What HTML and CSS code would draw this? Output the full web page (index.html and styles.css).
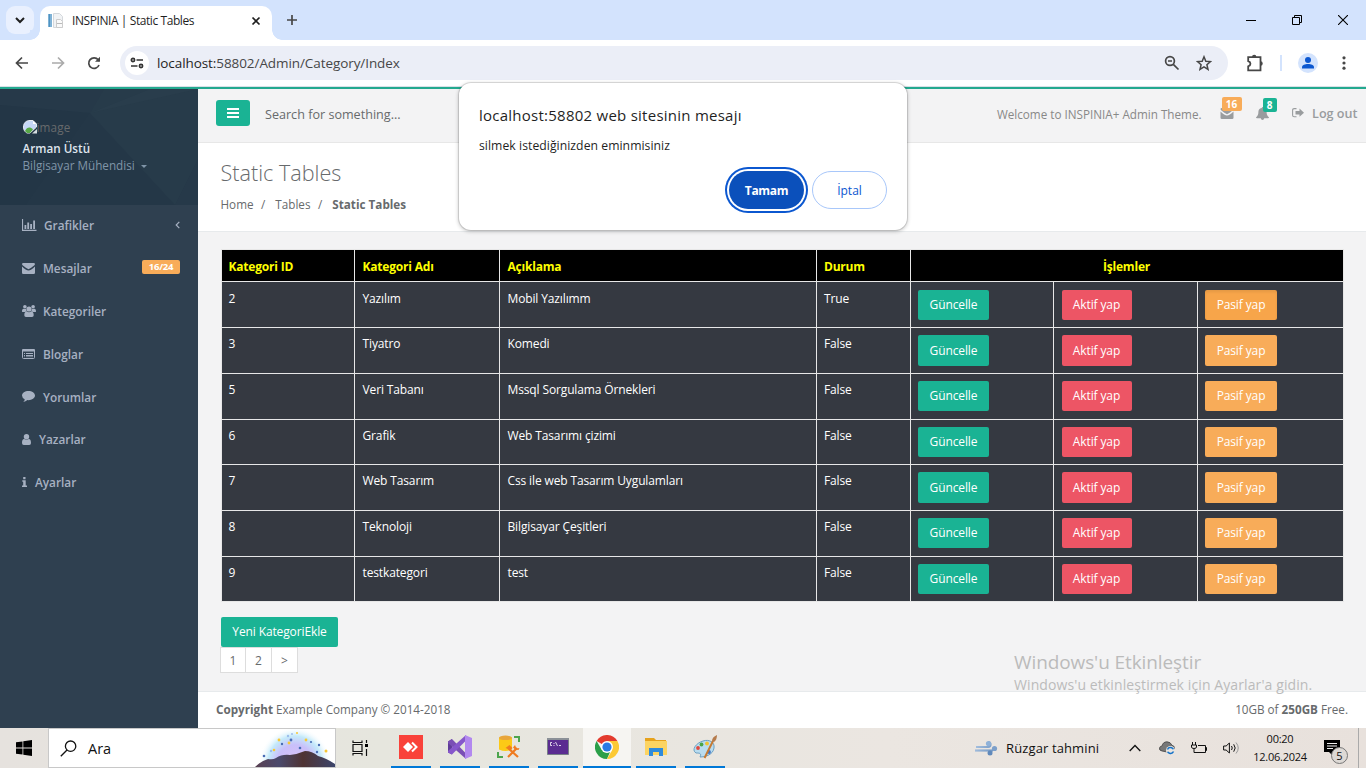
FILE: index.html
```html
<!DOCTYPE html>
<html lang="tr">
<head>
<meta charset="utf-8">
<title>INSPINIA | Static Tables</title>
<link rel="stylesheet" href="styles.css">
</head>
<body>
<div class="screen">
  <header class="tabstrip">
    <div class="tab-search"><svg width="12" height="12" viewBox="0 0 12 12"><path d="M2 4l4 4 4-4" fill="none" stroke="#1f1f1f" stroke-width="2"/></svg></div>
    <div class="tab">
      <svg width="16" height="16" viewBox="0 0 16 16"><path d="M0 1h4v13H0z" fill="#7fb2d6"/><path d="M1 1h1v13H1z" fill="#4f93c2"/><path d="M5.500.5h6l3 3v11h-9z" fill="#f1f3f5" stroke="#d4d8dc"/><path d="M8.500 6.500h4l2 2v6h-6z" fill="#fafafa" stroke="#ccc"/><path d="M9 10.500h5" stroke="#bbb"/></svg>
      <span class="tab-title">INSPINIA | Static Tables</span>
      <svg class="tab-close" width="10" height="10" viewBox="0 0 10 10"><path d="M1.500 1.500l7 7M8.500 1.500l-7 7" stroke="#1f1f1f" stroke-width="1.700"/></svg>
    </div>
    <svg class="new-tab" width="12" height="12" viewBox="0 0 12 12"><path d="M6 1v10M1 6h10" stroke="#474747" stroke-width="1.700"/></svg>
    <div class="win-buttons">
      <svg width="10" height="10" viewBox="0 0 10 10"><path d="M0 5.500h10" stroke="#000"/></svg>
      <svg width="10" height="10" viewBox="0 0 10 10"><path d="M.5 2.500h7v7h-7zM2.500 2.500v-2h7v7h-2" fill="none" stroke="#000"/></svg>
      <svg width="10" height="10" viewBox="0 0 10 10"><path d="M0 0l10 10M10 0L0 10" stroke="#000" stroke-width="1.100"/></svg>
    </div>
  </header>
  <nav class="toolbar">
    <svg width="14" height="14" viewBox="0 0 14 14"><path d="M13 7H2M7 1.500L1.500 7 7 12.500" fill="none" stroke="#474747" stroke-width="1.700"/></svg>
    <svg width="14" height="14" viewBox="0 0 14 14"><path d="M1 7h11M7 1.500L12.500 7 7 12.500" fill="none" stroke="#ababab" stroke-width="1.700"/></svg>
    <svg width="14" height="14" viewBox="0 0 14 14"><path d="M12 9a5.300 5.300 0 1 1-.8-5.200L12 5" fill="none" stroke="#474747" stroke-width="1.700"/><path d="M13 .8v5H8z" fill="#474747"/></svg>
    <div class="omnibox">
      <span class="site-info"><svg width="14" height="12" viewBox="0 0 14 12"><g fill="none" stroke="#333" stroke-width="1.700"><circle cx="3" cy="3" r="1.600"/><path d="M6.500 3H13M1 9h6.500"/><circle cx="11" cy="9" r="1.600"/></g></svg></span>
      <span class="url"><b>localhost:</b>58802/Admin/Category/Index</span>
      <svg class="zoom-out" width="16" height="16" viewBox="0 0 16 16"><g fill="none" stroke="#474747" stroke-width="1.700"><circle cx="6" cy="6" r="4.400"/><path d="M9.300 9.300l5.200 5.200M4 6h4"/></g></svg>
      <svg width="16" height="16" viewBox="0 0 16 16"><path d="M8 1.800l1.800 4.400 4.700.4-3.600 3.100 1.100 4.600L8 11.800l-4 2.500 1.100-4.600L1.500 6.600l4.700-.4z" fill="none" stroke="#474747" stroke-width="1.500"/></svg>
    </div>
    <svg class="puzzle" width="18" height="18" viewBox="0 0 18 18"><path d="M2.200 3.200h12.300v13.100H2.200v-4c3-1 3-4.200 0-5.200z" fill="none" stroke="#474747" stroke-width="1.800"/><path d="M6 3a2.200 2.200 0 0 1 4.400 0zM14.500 7.300a2.200 2.200 0 0 1 0 4.500z" fill="#474747"/></svg>
    <i class="divider"></i>
    <svg class="avatar" width="20" height="20" viewBox="0 0 20 20"><circle cx="10" cy="10" r="10" fill="#d3e3fd"/><circle cx="10" cy="7" r="3" fill="#0b57d0"/><path d="M4 15.500v-1.200c0-4.300 12-4.300 12 0v1.200z" fill="#0b57d0"/></svg>
    <svg class="dots" width="4" height="14" viewBox="0 0 4 14"><g fill="#474747"><circle cx="2" cy="1.800" r="1.600"/><circle cx="2" cy="7" r="1.600"/><circle cx="2" cy="12.200" r="1.600"/></g></svg>
  </nav>

  <div class="page">
    <aside class="sidebar">
      <div class="profile">
        <svg class="profile-bg" width="198" height="116" viewBox="0 0 198 116"><path d="M0 0h198v116H0z" fill="#263949"/><path d="M0 16l90 8L26 116H0z" fill="#233646"/><path d="M90 24l85 92H26z" fill="#243747"/><path d="M90 24L104 0h94v70l-23 46z" fill="#273b4a"/><path d="M90 24L150 0h48z" fill="#293d4c"/></svg>
        <div class="broken"><svg width="14" height="14" viewBox="0 0 14 14"><path d="M.5 7C.5 3 3 .5 7 .5h3l3.500 3.500V7L7 13H4C2 12 .5 10 .5 7z" fill="#c5d6f6" stroke="#e6eaf0"/><path d="M2 11c2-4 5-4.500 8-1.500L7 13H4z" fill="#57a846"/><path d="M10 .8V4h3.300z" fill="#fff"/><path d="M14 9v4.500H9z" fill="#d8dee3"/></svg><span>image</span></div>
        <strong>Arman Üstü</strong>
        <div class="role">Bilgisayar Mühendisi <i class="caret"></i></div>
      </div>
      <ul class="menu">
        <li><svg width="15" height="12" viewBox="0 0 15 12"><path d="M.5 0v11.300H14.500" fill="none" stroke="currentColor" stroke-width="1.200"/><path d="M2.500 6h1.800v4H2.500zM5.300 3.500h1.800V10H5.300zM8.200 5H10v5H8.200zM11.200 1.500H13V10h-1.800z" fill="currentColor"/></svg><span class="gap-w">Grafikler</span><svg class="arrow" width="5" height="8" viewBox="0 0 5 8"><path d="M4.300.8L1.200 4l3.100 3.200" fill="none" stroke="currentColor" stroke-width="1.200"/></svg></li>
        <li><svg width="13" height="11" viewBox="0 0 13 11"><path d="M0 1.300Q0 0 1.300 0h10.400Q13 0 13 1.300 12.500 2.800 6.500 6.300.5 2.800 0 1.300zM0 3.400q4 3.700 6.500 4.200Q9 7.100 13 3.400v6.300q0 1.300-1.300 1.300H1.300Q0 11 0 9.700z" fill="currentColor"/></svg><span>Mesajlar</span><em class="label">16/24</em></li>
        <li><svg width="14" height="12" viewBox="0 0 14 12"><g fill="currentColor"><circle cx="2.900" cy="1.800" r="1.800"/><circle cx="11.100" cy="1.800" r="1.800"/><circle cx="7" cy="4" r="2.600"/><path d="M0 6.500C0 4.200.8 3.400 2 3.700q1 .5 2 .1Q3.800 5 4.800 6.200 3.500 6.300 3 7H1Q0 7 0 6.500zM14 6.500c0-2.300-.8-3.100-2-2.800q-1 .5-2 .1.200 1.200-.8 2.400 1.300.1 1.800.8h2q1 0 1-.5zM2.300 10.200c0-2.700 1-3.900 2.500-3.700Q7 8 9.200 6.500c1.500-.2 2.500 1 2.500 3.700Q11.700 12 10 12H4Q2.300 12 2.300 10.200z"/></g></svg><span class="gap-w">Kategoriler</span></li>
        <li><svg width="13" height="10" viewBox="0 0 13 10"><path d="M.5 1.500v7q0 1 1 1h10q1 0 1-1v-7z" fill="none" stroke="currentColor"/><path d="M0 2.500V1q0-1 1-1h11q1 0 1 1v1.500zM2 4h1v1H2zM4 4h7v1H4zM2 6h1v1H2zM4 6h7v1H4z" fill="currentColor"/><path d="M2 7.700h1M4 7.700h7" stroke="currentColor" stroke-width=".6"/></svg><span>Bloglar</span></li>
        <li><svg width="13" height="11" viewBox="0 0 13 11"><path d="M6.500 0C10 0 13 2 13 4.600S10 9.200 6.500 9.200L5.400 9.100Q3.700 10.800 1.200 11 2.700 9.700 2.700 8.200 0 6.900 0 4.600C0 2 3 0 6.500 0z" fill="currentColor"/></svg><span>Yorumlar</span></li>
        <li><svg width="9" height="11" viewBox="0 0 9 11"><circle cx="4.500" cy="2.800" r="2.700" fill="currentColor"/><path d="M0 8.900C0 6.200.7 4.900 2.200 4.900q2.300 1.600 4.600 0C8.300 4.900 9 6.200 9 8.900Q9 11 7.200 11H1.800Q0 11 0 8.900z" fill="currentColor"/></svg><span>Yazarlar</span></li>
        <li><svg width="5" height="10" viewBox="0 0 5 10"><path d="M1.200 0h2.300v2.200H1.200zM.3 3.300h3.400v5.200H5V10H0V8.500h1.200V4.800H.3z" fill="currentColor"/></svg><span>Ayarlar</span></li>
      </ul>
    </aside>
    <main class="content">
      <div class="topbar">
        <span class="burger"><svg width="12" height="10" viewBox="0 0 12 10"><path d="M0 1h12M0 5h12M0 9h12" stroke="#fff" stroke-width="2"/></svg></span>
        <span class="search">Search for something...</span>
        <span class="welcome">Welcome to INSPINIA+ Admin Theme.</span>
        <span class="notice mail"><svg width="14" height="11" viewBox="0 0 13 11"><path d="M0 1.300Q0 0 1.300 0h10.400Q13 0 13 1.300 12.500 2.800 6.500 6.300.5 2.800 0 1.300zM0 3.400q4 3.700 6.500 4.200Q9 7.100 13 3.400v6.300q0 1.300-1.300 1.300H1.300Q0 11 0 9.700z" fill="currentColor"/></svg><em>16</em></span>
        <span class="notice bell"><svg width="13" height="13" viewBox="0 0 13 13"><path d="M5.800 1q0-1 .7-1t.7 1C10 1.500 10.600 3.400 10.600 5c0 3 1 4.200 2.400 5.200q0 1-1 1H8.200q-.2 1.700-1.700 1.700t-1.700-1.700H1q-1 0-1-1C1.400 9.200 2.400 8 2.400 5c0-1.600.6-3.500 3.400-4z" fill="currentColor"/></svg><em>8</em></span>
        <span class="logout"><svg width="12" height="10" viewBox="0 0 12 10"><path d="M4.500.6H2.200Q.6.600.6 2.200v5q0 1.600 1.600 1.600h2.300" fill="none" stroke="currentColor" stroke-width="1.100"/><path d="M3.500 3h4V.6L12 4.700 7.500 8.800V6.400h-4z" fill="currentColor"/></svg><b>Log out</b></span>
      </div>
      <div class="heading">
        <h2>Static Tables</h2>
        <div class="crumbs"><span>Home</span><i>/</i><span>Tables</span><i>/</i><strong>Static Tables</strong></div>
      </div>
      <div class="body">
        <table class="grid">
          <colgroup><col class="c1"><col class="c2"><col class="c3"><col class="c4"><col class="c5"><col class="c6"><col class="c7"></colgroup>
          <thead><tr><th>Kategori ID</th><th>Kategori Adı</th><th>Açıklama</th><th>Durum</th><th colspan="3" class="center">İşlemler</th></tr></thead>
          <tbody>
            <tr class="first"><td>2</td><td>Yazılım</td><td>Mobil Yazılımm</td><td>True</td><td><a class="btn green">Güncelle</a></td><td><a class="btn red">Aktif yap</a></td><td><a class="btn orange pressed">Pasif yap</a></td></tr>
            <tr class="tall"><td>3</td><td>Tiyatro</td><td>Komedi</td><td>False</td><td><a class="btn green">Güncelle</a></td><td><a class="btn red">Aktif yap</a></td><td><a class="btn orange">Pasif yap</a></td></tr>
            <tr><td>5</td><td>Veri Tabanı</td><td>Mssql Sorgulama Örnekleri</td><td>False</td><td><a class="btn green">Güncelle</a></td><td><a class="btn red">Aktif yap</a></td><td><a class="btn orange">Pasif yap</a></td></tr>
            <tr class="short"><td>6</td><td>Grafik</td><td>Web Tasarımı çizimi</td><td>False</td><td><a class="btn green">Güncelle</a></td><td><a class="btn red">Aktif yap</a></td><td><a class="btn orange">Pasif yap</a></td></tr>
            <tr class="tall"><td>7</td><td>Web Tasarım</td><td>Css ile web Tasarım Uygulamları</td><td>False</td><td><a class="btn green">Güncelle</a></td><td><a class="btn red">Aktif yap</a></td><td><a class="btn orange">Pasif yap</a></td></tr>
            <tr><td>8</td><td>Teknoloji</td><td>Bilgisayar Çeşitleri</td><td>False</td><td><a class="btn green">Güncelle</a></td><td><a class="btn red">Aktif yap</a></td><td><a class="btn orange">Pasif yap</a></td></tr>
            <tr class="short"><td>9</td><td>testkategori</td><td>test</td><td>False</td><td><a class="btn green">Güncelle</a></td><td><a class="btn red">Aktif yap</a></td><td><a class="btn orange">Pasif yap</a></td></tr>
          </tbody>
        </table>
        <a class="btn green add">Yeni KategoriEkle</a>
        <div class="pager"><span>1</span><span>2</span><span>&gt;</span></div>
      </div>
      <footer class="footer"><span><strong>Copyright</strong> Example Company © 2014-2018</span><span class="free">10GB of <strong>250GB</strong> Free.</span></footer>
    </main>
  </div>

  <footer class="taskbar">
    <span class="start"><svg width="16" height="16" viewBox="0 0 16 16"><path d="M0 2.300l6.500-.9v6.200H0zM7.300 1.300L16 0v7.600H7.300zM0 8.400h6.500v6.200L0 13.700zM7.300 8.400H16V16l-8.700-1.300z"/></svg></span>
    <div class="searchbox">
      <svg width="17" height="17" viewBox="0 0 17 17"><g fill="none" stroke="#111" stroke-width="1.300"><circle cx="10.600" cy="6.200" r="5.200"/><path d="M7 10L.8 16.300"/></g></svg>
      <span>Ara</span>
      <svg class="scene" width="80" height="38" viewBox="0 0 80 38">
        <defs><radialGradient id="sky" gradientUnits="userSpaceOnUse" cx="40" cy="34" r="36"><stop offset="0" stop-color="#dcc2f6"/><stop offset=".5" stop-color="#c9bffa"/><stop offset=".75" stop-color="#c4eafa"/><stop offset="1" stop-color="#fff" stop-opacity="0"/></radialGradient><linearGradient id="hill" x2="1" y2="0"><stop offset="0" stop-color="#5a4052"/><stop offset=".3" stop-color="#4b4a6c"/><stop offset=".6" stop-color="#4f3333"/><stop offset="1" stop-color="#3c456b"/></linearGradient></defs>
        <path d="M0 0h80v38H0z" fill="url(#sky)"/>
        <path d="M0 38Q6 32 13 30q5 1 8-1 6-4 14-3 8-1 15-4 7 0 13 5 8 2 17 8v3z" fill="url(#hill)"/>
        <g fill="#f6c736"><circle cx="24" cy="11" r="1.400"/><circle cx="34" cy="14" r="1.400"/><circle cx="51" cy="11" r="1.400"/><circle cx="19" cy="21" r="1.300"/><circle cx="71" cy="22" r="1.500"/><circle cx="42" cy="4" r="1"/></g>
        <g fill="#496db5"><circle cx="36" cy="11" r="1.400"/><circle cx="27" cy="15" r="1.200"/><circle cx="56" cy="13" r="1.100"/><circle cx="45" cy="19" r="1.300"/><circle cx="64" cy="16" r="1.200"/><circle cx="9" cy="27" r="1.300"/><circle cx="62" cy="23" r="1.200"/></g>
        <g fill="#9dbdec"><circle cx="33" cy="7" r="1.200"/><circle cx="37" cy="5" r="1"/><circle cx="16" cy="22" r="1.200"/></g>
      </svg>
    </div>
    <span class="taskview"><svg width="16" height="16" viewBox="0 0 16 16"><path d="M1 .5v2h9v-2M1 4.500h9v7H1zM1 15.500v-2h9v2M14.500 0v3M14.500 9v7" fill="none" stroke="#111" stroke-width="1.200"/><path d="M13 4h3v3h-3z"/></svg></span>
    <div class="apps">
      <span><svg width="24" height="24" viewBox="0 0 24 24"><path d="M0 0h24v24H0z" fill="#f9423a"/><path d="M4 12l5-5 5 5-5 5z" fill="#fff"/><path d="M13 7.500l4.500 4.500-4.500 4.500" fill="none" stroke="#fff" stroke-width="2"/></svg></span>
      <span><svg width="24" height="24" viewBox="0 0 24 24"><path d="M0 6.500L4 4v15.500L0 17.500z" fill="#5f3c99"/><path d="M4 4l14 14.500V24L0 8V6.500z" fill="#7a4fb5"/><path d="M4 19.500L18 5.500V0L0 16v1.500z" fill="#8657cb"/><path d="M17 0l7 3v18l-7 3z" fill="#b288ef"/></svg></span>
      <span><svg width="24" height="24" viewBox="0 0 24 24"><path d="M2 2.500h13v12q-6.500 3-13 0z" fill="#fcc916"/><ellipse cx="8.500" cy="2.800" rx="6.500" ry="2.300" fill="#e8a63b"/><path d="M17 2h5v5M1 17v5h5" fill="none" stroke="#4ca54d" stroke-width="2"/><path d="M11 22l9-9M11 13l10 9" stroke="#ef7b20" stroke-width="2.200"/><path d="M8.500 13l4-3 3 3-2 2zM18 10l1.500 3.500 3-.5-1 2-3.500-.5-2-2z" fill="#ef7b20"/></svg></span>
      <span><svg width="22" height="18" viewBox="0 0 22 18"><path d="M.5 1.500h21v15H.5z" fill="#5b2c91" stroke="#777f86"/><path d="M0 0h22v2H0z" fill="#8b9097"/><path d="M5 4.500H3.500v3H5M7 5v1M7 7v1M8.500 4l2 4M12 7.500h2" fill="none" stroke="#fff" stroke-width=".8"/></svg></span>
      <span class="active"><svg width="24" height="24" viewBox="0 0 24 24"><path d="M12 12L1.600 6A12 12 0 0 1 22.400 6z" fill="#e33b2e"/><path d="M12 12h5.200L12 24A12 12 0 0 1 1.600 6l5.200 9z" fill="#2b9f49"/><path d="M12 6h10.400A12 12 0 0 1 12 24l5.200-9z" fill="#fcc934"/><circle cx="12" cy="12" r="6" fill="#fff"/><circle cx="12" cy="12" r="4.600" fill="#2a7be4"/></svg></span>
      <span><svg width="22" height="18" viewBox="0 0 22 18"><path d="M0 0h9l2 2h10v15H0z" fill="#e6a21c"/><path d="M0 3h22v14H0z" fill="#fcd462"/><path d="M4 10h14v8h-4v-4H8v4H4z" fill="#2f8bdc"/></svg></span>
      <span><svg width="24" height="24" viewBox="0 0 24 24"><path d="M10 6c6-2 12 1 11 7-1 7-9 9-14 9 2-4-1-4-4-4C-2 15 3 8 10 6z" fill="#b9dcef" stroke="#6b9fc2"/><circle cx="5" cy="13" r="1.900" fill="#e0483c"/><circle cx="8.500" cy="9.500" r="1.900" fill="#49a546"/><circle cx="14" cy="8.500" r="1.900" fill="#f2c230"/><circle cx="16" cy="17" r="1.900" fill="#3f75c7"/><path d="M11.500 23L20 6" stroke="#c67a32" stroke-width="2"/><path d="M19 6q0-4 5-6 0 5-3 7z" fill="#b57b4c"/></svg></span>
    </div>
    <div class="weather"><svg width="24" height="16" viewBox="0 0 24 16"><defs><linearGradient id="wind" gradientUnits="userSpaceOnUse" x1="0" y1="0" x2="24" y2="16"><stop stop-color="#b4cbe6"/><stop offset="1" stop-color="#5d86b8"/></linearGradient></defs><g fill="none" stroke="url(#wind)" stroke-width="2.200"><path d="M2 7h12q2.500-.3 2.500-2.500T14 2.200"/><path d="M1 10.500h18"/></g><circle cx="14.500" cy="3.600" r="2.600" fill="#8fb1d8"/><circle cx="20.500" cy="8.500" r="2.600" fill="#7c9fca"/><circle cx="16" cy="13" r="2.500" fill="#6089bb"/></svg><span>Rüzgar tahmini</span></div>
    <svg class="up" width="12" height="8" viewBox="0 0 12 8"><path d="M.7 7L6 1.500 11.300 7" fill="none" stroke="#111" stroke-width="1.300"/></svg>
    <svg class="cloud" width="16" height="14" viewBox="0 0 16 14"><path d="M3 10Q0 9.500.5 7 1 5 3 5 4 .8 8 .8q3.500 0 5 3.500Q16 5 15.500 8L8 11z" fill="#777" stroke="#444" stroke-width=".8"/><circle cx="11.500" cy="9.500" r="4.500" fill="#e9e5e0"/><path d="M8.500 8.500q1-2.500 4-1.800L14.500 8M14.500 10.500q-1 2.500-4 1.800L8.500 11" fill="none" stroke="#1672c8" stroke-width="1.500"/></svg>
    <svg class="battery" width="17" height="13" viewBox="0 0 17 13"><path d="M7 3.500h7.500v7H5M14.500 5.500h1v3h-1M1.500 0v3M4.500 0v3M.5 3h5v2q0 1.500-2.500 1.500T.5 5zM3 6.500V10.500h2" fill="none" stroke="#111"/></svg>
    <svg class="sound" width="17" height="14" viewBox="0 0 17 14"><path d="M.6 5v4h2.500l3.300 3V2L3.100 5z" fill="none" stroke="#111"/><path d="M8.500 5q1.500 2 0 4M10.700 3.300q3 3.700 0 7.400" fill="none" stroke="#111"/><path d="M13 1.500q4.500 5.500 0 11" fill="none" stroke="#999"/></svg>
    <div class="clock"><span>00:20</span><span>12.06.2024</span></div>
    <div class="action"><svg width="16" height="16" viewBox="0 0 16 16"><path d="M0 0h16v12H9v4l-4-4H0z"/><path d="M3 3.500h10M3 6h10M3 8.500h6" stroke="#eee"/></svg><b>5</b></div>
    <i class="peek"></i>
  </footer>

  <div class="watermark"><div class="wm-title">Windows'u Etkinleştir</div><div class="wm-text">Windows'u etkinleştirmek için Ayarlar'a gidin.</div></div>
  <div class="dialog">
    <div class="dialog-title">localhost:58802 web sitesinin mesajı</div>
    <div class="dialog-text">silmek istediğinizden eminmisiniz</div>
    <div class="dialog-actions"><span class="ok">Tamam</span><span class="cancel">İptal</span></div>
  </div>
</div>
</body>
</html>
```
FILE: styles.css
```css
* { box-sizing: border-box; }
body { margin: 0; }
svg { display: block; flex: none; }
ul { list-style: none; margin: 0; padding: 0; }
em, i { font-style: normal; }
.screen { position: relative; width: 1366px; height: 768px; overflow: hidden; display: flex; flex-direction: column; font-family: "Open Sans", "Noto Sans", sans-serif; font-size: 11.700px; color: #676a6c; white-space: nowrap; background: #fff; }

/* browser chrome */
.tabstrip { height: 40px; flex: none; background: #d3e3fd; display: flex; align-items: center; padding-left: 6px; }
.tab-search { width: 28px; height: 28px; border-radius: 9px; background: #e9f0fe; display: flex; align-items: center; justify-content: center; }
.tab { align-self: flex-end; position: relative; width: 232px; height: 34px; margin-left: 6px; padding: 0 11px 5px 8px; border-radius: 10px 10px 0 0; background: #fff; display: flex; align-items: center; color: #1f1f1f; }
.tab::before, .tab::after { content: ""; position: absolute; bottom: 0; width: 10px; height: 10px; }
.tab::before { left: -10px; background: radial-gradient(circle at 0 0, #d3e3fd 9.5px, #fff 10px); }
.tab::after { right: -10px; background: radial-gradient(circle at 100% 0, #d3e3fd 9.5px, #fff 10px); }
.tab-title { margin-left: 8px; font-size: 12px; letter-spacing: -0.42px; }
.tab-close { margin-left: auto; }
.new-tab { margin-left: 14px; }
.win-buttons { margin-left: auto; margin-right: 18px; display: flex; gap: 36px; }
.toolbar { height: 47px; flex: none; border-bottom: 1px solid #d9e0e6; display: flex; align-items: center; padding-left: 15px; gap: 22px; }
.omnibox { width: 1108px; height: 34px; border-radius: 17px; background: #ebeef7; margin-left: -3px; padding: 0 16px 0 5px; display: flex; align-items: center; color: #1f1f1f; }
.site-info { width: 24px; height: 24px; border-radius: 50%; background: #fff; display: flex; align-items: center; justify-content: center; }
.url { margin-left: 8px; font-size: 13.500px; letter-spacing: -.08px; color: #474747; }
.url b { font-weight: 400; color: #1f1f1f; }
.zoom-out { margin-left: auto; margin-right: 16px; }
.puzzle { margin-left: -4px; }
.divider { width: 2px; height: 16px; background: #d3e3fd; margin-left: -6px; }
.avatar { margin-left: -6px; }
.dots { margin-left: 2px; }

/* page shell */
.page { height: 641px; flex: none; border-top: 2px solid #23a98f; display: flex; }
.sidebar { width: 198px; flex: none; background: #2f4050; color: #a7b1c2; }
.profile { position: relative; height: 116px; padding: 29px 0 0 22.500px; }
.profile-bg { position: absolute; inset: 0; }
.profile > div, .profile > strong { position: relative; display: flex; align-items: center; }
.broken { height: 17px; color: #676a6c; }
.broken span { letter-spacing: .15px; }
.profile strong { color: #dfe4ed; font-weight: 600; line-height: 17px; margin-top: 5px; }
.role { color: #8095a8; line-height: 18px; margin-top: -1px; }
.caret { border: 3px solid transparent; border-top-color: #8095a8; border-bottom: 0; margin-left: 6px; margin-top: 3px; }
.menu { margin-top: -1px; }
.menu li { height: 42.800px; padding: 0 18px 0 22px; display: flex; align-items: center; font-weight: 600; font-size: 11.800px; }
.menu span { margin-left: 8px; }
.menu .gap-w { margin-left: 7px; }
.arrow { margin-left: auto; }
.label { margin-left: auto; width: 38px; height: 14px; line-height: 14px; border-radius: 2px; background: #f8ac59; color: #fff; font-size: 9.500px; letter-spacing: -.2px; font-weight: 700; text-align: center; margin-top: -2px; }
.content { flex: 1; background: #f3f3f4; display: flex; flex-direction: column; }
.topbar { height: 54px; flex: none; border-bottom: 1px solid #e7e7e7; display: flex; padding: 0 9.500px 5px 18px; align-items: center; }
.burger { width: 34px; height: 26px; border-radius: 3px; background: #1ab394; display: flex; align-items: center; justify-content: center; }
.search { margin-left: 15px; margin-top: 2px; font-size: 12.600px; }
.welcome { margin-left: auto; margin-top: 2px; color: #888; }
.notice { position: relative; color: #999c9e; }
.mail { margin-left: 18px; }
.bell { margin-left: 22px; }
.notice em { position: absolute; color: #fff; font-size: 10px; font-weight: 700; line-height: 14px; border-radius: 2px; text-align: center; height: 14px; }
.mail em { left: 2px; top: -11px; width: 20px; background: #f8ac59; }
.bell em { left: 7px; top: -9px; width: 14px; background: #1ab394; }
.logout { margin-left: 23px; display: flex; align-items: center; gap: 8.500px; color: #999c9e; }
.logout b { font-size: 12.600px; font-weight: 600; }
.heading { height: 89px; flex: none; background: #fff; border-bottom: 1px solid #e7eaec; padding: 14px 22.500px; }
.heading h2 { margin: 0; font-size: 21.600px; line-height: 32px; font-weight: 300; }
.crumbs { display: flex; line-height: 18px; margin-top: 6px; }
.crumbs i { margin: 0 10px 0 7.500px; }

/* table */
.body { flex: 1; padding: 17px 23px 0; }
.grid { table-layout: fixed; width: 1123px; border-spacing: 0; border: solid #e7e7e7; border-width: 1px 0 0 1px; background: #353941; color: #fff; font-size: 12px; letter-spacing: -.13px; }
.c1 { width: 133px; } .c2 { width: 145px; } .c3 { width: 317px; } .c4 { width: 94px; } .c5 { width: 143px; } .c6 { width: 144px; } .c7 { width: 146px; }
.grid th, .grid td { border: solid #e7e7e7; border-width: 0 1px 1px 0; text-align: left; padding: 0 0 0 7.500px; }
.grid th:first-child, .grid td:first-child { padding-left: 6.500px; }
.grid th:nth-child(4), .grid td:nth-child(4), .grid td:nth-child(5), .grid td:nth-child(7) { padding-left: 7px; }
.grid th { height: 32px; padding-top: 2px; background: #000; color: #ff0; font-weight: 700; letter-spacing: -.2px; }
.grid th.center { text-align: center; padding-left: 0; padding-right: 1px; }
.grid td { height: 46px; vertical-align: top; padding-top: 7px; line-height: 17px; }
.grid .first td { padding-top: 8px; }
.grid .short td { height: 45px; }
.btn { display: inline-block; height: 30px; line-height: 30px; border-radius: 2px; color: #fff; font-size: 12px; letter-spacing: -.12px; text-align: center; vertical-align: top; }
.tall .btn { height: 31px; line-height: 31px; }
.green { width: 71px; background: #1ab394; } .red { width: 70px; background: #ed5565; } .orange { width: 72px; background: #f8ac59; }
.pressed { background: #f7a54a; box-shadow: inset 0 2px 3px rgba(0,0,0,.08); }
.add { width: 117px; margin-top: 15px; }
.pager { display: flex; margin-left: -1px; font-size: 12px; }
.pager span { width: 27px; height: 26px; line-height: 25px; border: 1px solid #ddd; background: #fff; text-align: center; margin-right: -1px; }
.pager span:first-child { width: 26px; }
.footer { height: 37px; flex: none; background: #fff; border-top: 1px solid #e7eaec; display: flex; justify-content: space-between; align-items: center; padding: 0 19px 2px 18px; }

/* native dialog */
.dialog { position: absolute; left: 459px; top: 83px; width: 448px; height: 147px; padding: 21px 20px; background: #fff; border-radius: 12px; box-shadow: 0 0 0 1px rgba(0,0,0,.1), 0 1px 4px rgba(0,0,0,.3); color: #1f1f1f; }
.dialog-title { font-size: 15px; line-height: 22px; font-weight: 500; letter-spacing: .25px; }
.dialog-text { font-size: 12.200px; line-height: 18px; margin-top: 11px; letter-spacing: .05px; }
.dialog-actions { display: flex; justify-content: flex-end; gap: 8px; margin-top: 16px; }
.ok, .cancel { width: 75px; height: 38px; line-height: 39px; border-radius: 19px; text-align: center; font-weight: 600; font-size: 12px; }
.ok { background: #0b50bb; color: #fff; font-weight: 700; letter-spacing: -.3px; box-shadow: 0 0 0 2px #fff, 0 0 0 4px #0b57d0; }
.cancel { border: 1px solid #a8c7fa; color: #0b57d0; line-height: 37px; font-weight: 500; }
.watermark { position: absolute; left: 1014px; top: 649px; color: #bbb; }
.wm-title { font-size: 19px; line-height: 26px; letter-spacing: -.1px; }
.wm-text { font-size: 14px; line-height: 20px; letter-spacing: .1px; }

/* taskbar */
.taskbar { height: 40px; flex: none; background: linear-gradient(90deg, #e6e2de, #e6e6de 28%, #ebe6e1 65%, #e8e1dc); display: flex; align-items: center; color: #111; }
.start { width: 48px; padding-left: 16px; }
.searchbox { width: 288px; height: 40px; border: 1px solid #c8c8c8; background: #fff; display: flex; align-items: center; padding-left: 11px; font-size: 14.500px; }
.searchbox span { margin-left: 11px; }
.scene { margin-left: auto; }
.taskview { margin-left: 16px; }
.apps { display: flex; height: 40px; margin-left: 23px; gap: 9px; }
.apps span { width: 40px; border-bottom: 2px solid #0078d7; display: flex; align-items: center; justify-content: center; }
.apps .active { width: 48px; background: #f6f5f2; margin: 0 -4px; }
.weather { display: flex; align-items: center; gap: 8px; margin-left: 249px; width: 125px; font-size: 13px; letter-spacing: .12px; }
.up { margin-left: 30px; }
.cloud { margin-left: 18px; }
.battery { margin-left: 16px; }
.sound { margin-left: 15px; }
.clock { width: 74px; margin-left: 3px; display: flex; flex-direction: column; align-items: center; font-size: 11px; line-height: 18px; letter-spacing: -.25px; }
.action { position: relative; margin-left: 7px; }
.action b { position: absolute; left: 7px; top: 7px; width: 17px; height: 17px; line-height: 15px; border: 1px solid #777; border-radius: 50%; background: #ddd9d5; text-align: center; font-size: 11px; font-weight: 400; }
.peek { width: 1px; height: 40px; background: #aaa; margin-left: 18px; }
```
